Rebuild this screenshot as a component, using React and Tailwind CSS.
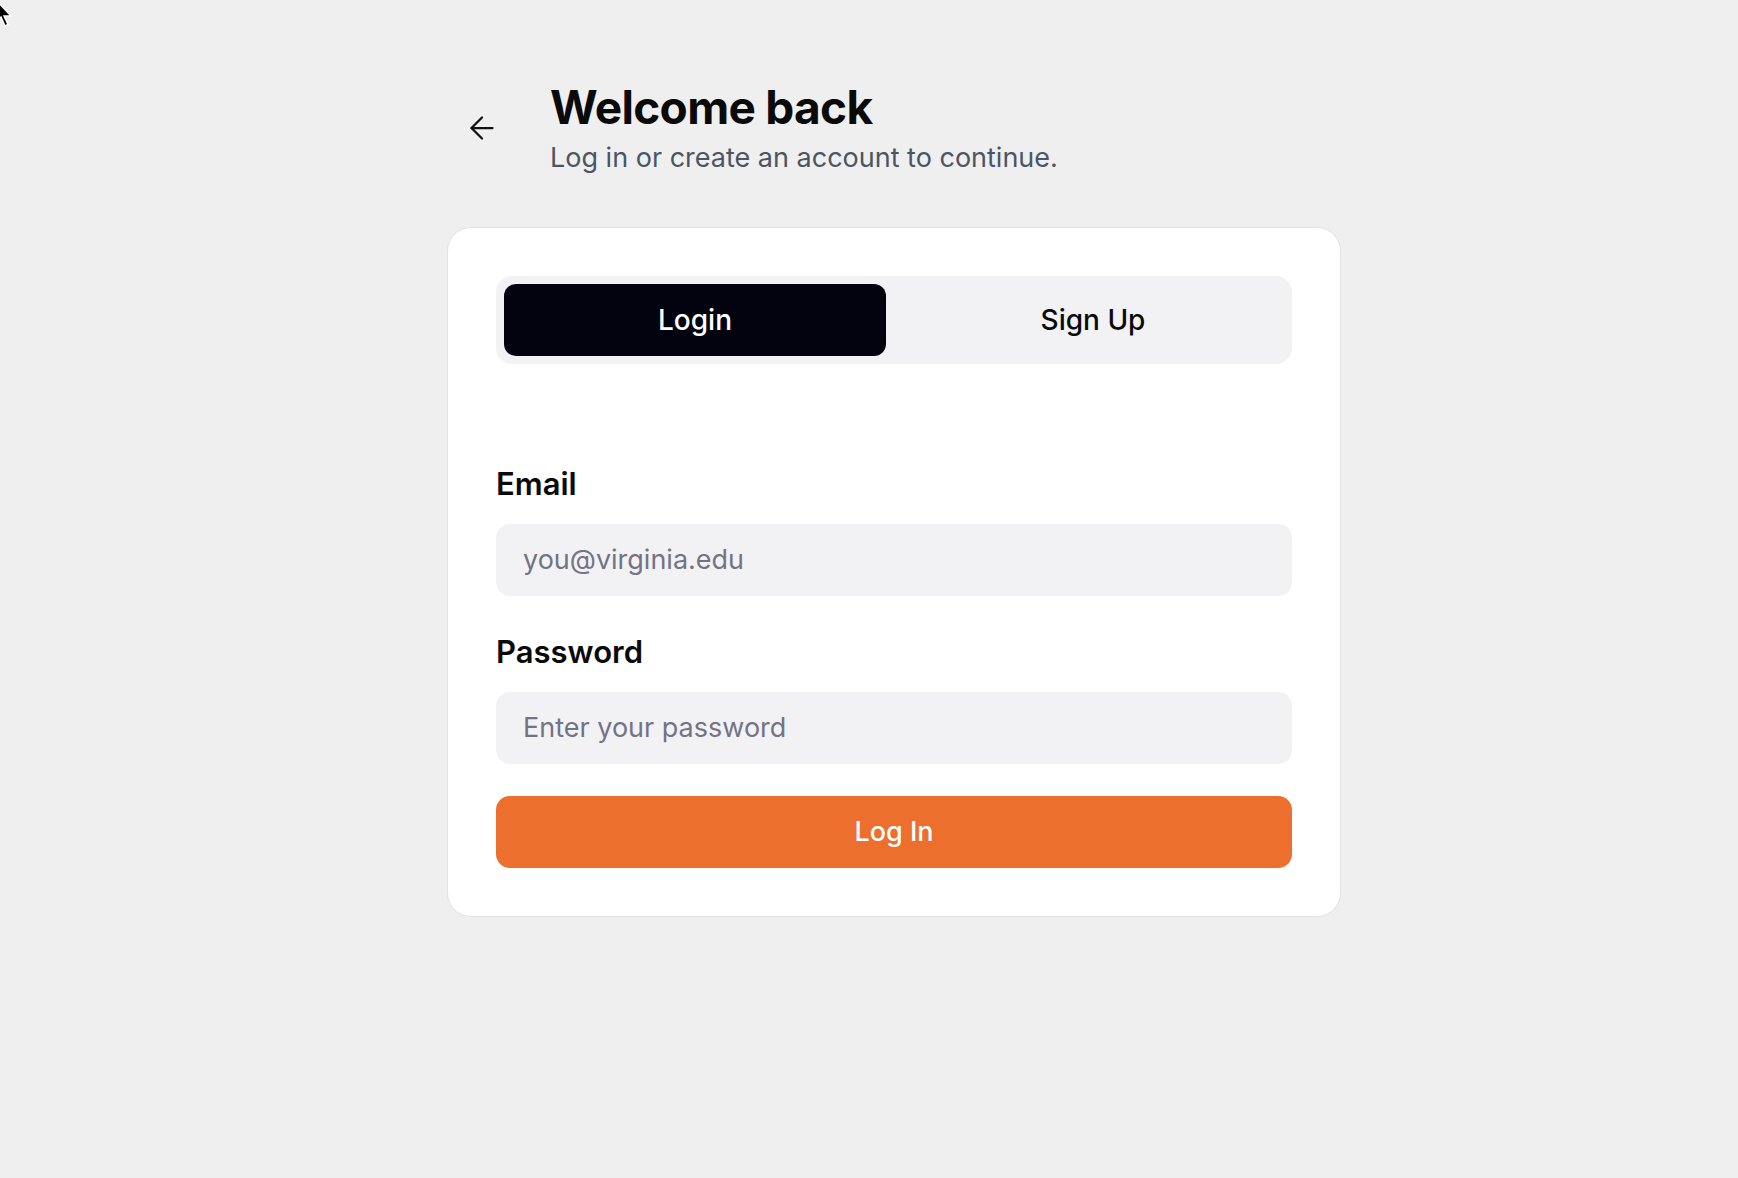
import React from "react";

function ArrowLeft() {
  return (
    <svg width="36" height="36" viewBox="0 0 24 24" fill="none" stroke="#111111" strokeWidth="1.5" strokeLinecap="round" strokeLinejoin="round">
      <path d="m12 19-7-7 7-7" />
      <path d="M19 12H5" />
    </svg>
  );
}

export default function App() {
  return (
    <div className="relative min-h-[1178px] w-full bg-[#efefef] font-['Inter','Noto_Sans',sans-serif] text-[#0a0a0a]">
      <svg className="absolute left-[-6px] top-[-2px]" width="18" height="30" viewBox="0 0 18 30">
        <path d="M2 2 L2 24 L7 19 L11 28 L14 26.5 L10 18 L17 18 Z" fill="#000" stroke="#fff" strokeWidth="1.5" />
      </svg>
      <div className="ml-[447px] w-[894px] pt-[80px]">
        <div className="flex items-center pl-[17px]">
          <button className="flex h-[36px] w-[36px] items-center justify-center">
            <ArrowLeft />
          </button>
          <div className="ml-[50px] flex flex-col">
            <h1 className="text-[46px] font-bold leading-[54px] tracking-[-0.015em] text-[#0a0a0a]">Welcome back</h1>
            <p className="mt-[7px] text-[27px] leading-[34px] text-[#4b5563]">Log in or create an account to continue.</p>
          </div>
        </div>

        <div className="mt-[52px] rounded-[24px] border border-[#e3e3e3] bg-white p-[48px]">
          <div className="grid h-[88px] grid-cols-2 gap-4 rounded-[16px] bg-[#f2f2f4] p-2">
            <button className="flex items-center justify-center rounded-[12px] bg-[#03030f] text-[28px] font-medium text-white">
              Login
            </button>
            <button className="flex items-center justify-center rounded-[12px] text-[28px] font-medium text-[#0a0a0a]">
              Sign Up
            </button>
          </div>

          <div className="mt-[103px] flex flex-col gap-[39px]">
            <div className="flex flex-col">
              <label className="mb-[23px] text-[31px] font-semibold leading-[34px]">Email</label>
              <div className="flex h-[72px] items-center rounded-[14px] bg-[#f2f2f4] px-[27px] text-[27px] text-[#737384]">
                you@virginia.edu
              </div>
            </div>
            <div className="flex flex-col">
              <label className="mb-[23px] text-[31px] font-semibold leading-[34px]">Password</label>
              <div className="flex h-[72px] items-center rounded-[14px] bg-[#f2f2f4] px-[27px] text-[27px] text-[#737384]">
                Enter your password
              </div>
            </div>
          </div>

          <button className="mt-[32px] flex h-[72px] w-full items-center justify-center rounded-[14px] bg-[#ec6f2e] text-[27px] font-medium text-white">
            Log In
          </button>
        </div>
      </div>
    </div>
  );
}
